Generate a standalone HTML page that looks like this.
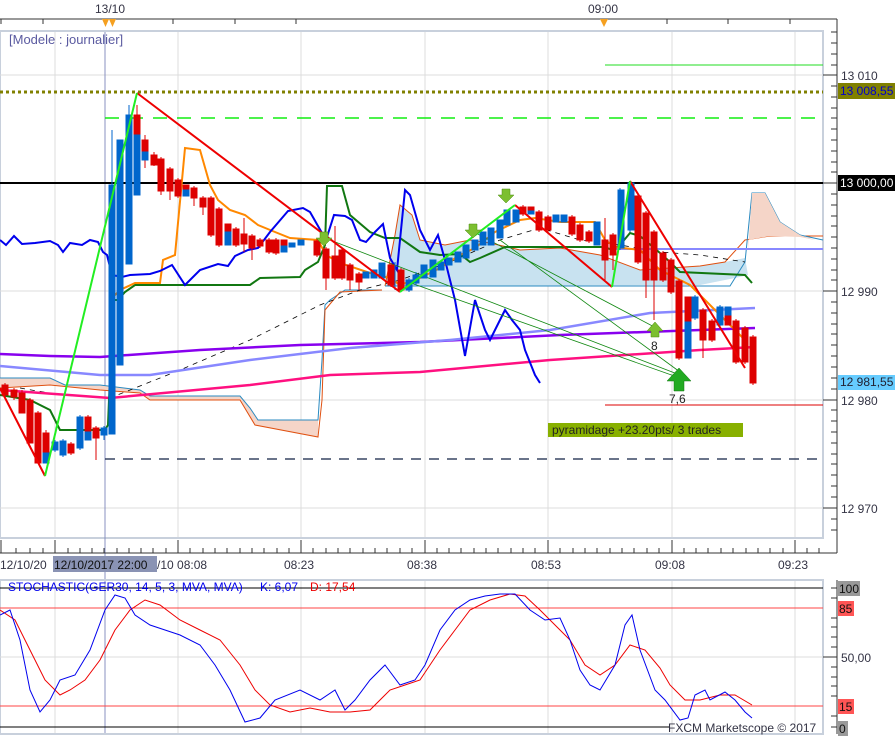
<!DOCTYPE html>
<html><head><meta charset="utf-8"><style>
html,body{margin:0;padding:0;background:#fff;}
svg{display:block;font-family:"Liberation Sans",sans-serif;}
</style></head><body>
<svg width="895" height="736" viewBox="0 0 895 736" xmlns="http://www.w3.org/2000/svg">
<rect width="895" height="736" fill="#fff"/>
<line x1="0" y1="19" x2="837" y2="19" stroke="#333"/>
<line x1="837" y1="19" x2="837" y2="553" stroke="#333"/>
<g stroke="#333">
<line x1="1" y1="19" x2="1" y2="24"/><line x1="43" y1="19" x2="43" y2="24"/><line x1="173" y1="19" x2="173" y2="24"/><line x1="235" y1="19" x2="235" y2="24"/><line x1="296" y1="19" x2="296" y2="24"/><line x1="667" y1="19" x2="667" y2="24"/><line x1="728" y1="19" x2="728" y2="24"/><line x1="790" y1="19" x2="790" y2="24"/>
</g>
<text x="95" y="13" font-size="12" fill="#334">13/10</text>
<text x="588" y="13" font-size="12" fill="#334">09:00</text>
<path d="M102,19 L109,19 L105.5,27 Z M109,19 L116,19 L112.5,27 Z M600,19 L608,19 L604,27 Z" fill="#f5a020"/>
<rect x="0" y="31" width="823" height="507" fill="#fff" stroke="#c8d0dc" stroke-width="2"/>
<g stroke="#dcdcdc">
<line x1="55" y1="32" x2="55" y2="537"/><line x1="178" y1="32" x2="178" y2="537"/><line x1="301" y1="32" x2="301" y2="537"/><line x1="425" y1="32" x2="425" y2="537"/><line x1="548" y1="32" x2="548" y2="537"/><line x1="672" y1="32" x2="672" y2="537"/><line x1="795" y1="32" x2="795" y2="537"/>
<line x1="0" y1="75" x2="823" y2="75"/><line x1="0" y1="291" x2="823" y2="291"/><line x1="0" y1="400" x2="823" y2="400"/><line x1="0" y1="508" x2="823" y2="508"/>
</g>
<line x1="105" y1="32" x2="105" y2="733" stroke="#8890c0"/>
<text x="9" y="44" font-size="13" fill="#5a5aa0">[Modele : journalier]</text>
<path d="M0,378 L50,378 L65,385 L100,385 L140,390 L150,396 L240,396 L250,408 L258,420 L318,420 L318,437 L255,425 L240,400 L150,400 L140,393 L100,390 L50,385 L0,388 Z" fill="#f5d5c8"/>
<path d="M0,378 L50,378 L65,385 L100,385 L140,390 L150,396 L240,396 L250,408 L258,420 L318,420 L322,360 L325,305 L330,300 L345,290 L382,290" fill="none" stroke="#2a8ac0" stroke-width="1"/>
<path d="M0,388 L50,385 L100,390 L140,393 L150,400 L240,400 L255,425 L318,437 L322,400 L325,310 L340,292 L382,290" fill="none" stroke="#e05010" stroke-width="1"/>
<path d="M385,286 L395,235 L400,205 L412,215 L420,240 L445,245 L470,240 L490,243 L520,250 L560,248 L600,255 L640,270 L700,266 L725,262 L745,258 L748,275 L735,278 L700,285 L385,286 Z" fill="#c8e2f0"/>
<path d="M385,286 L395,235 L400,205 L412,215 L420,240 L445,245 L470,240 L490,243 L520,250 L560,248 L600,255 L640,270 L700,266 L725,262 L745,240 L770,236 L800,236 L823,236" fill="none" stroke="#e05010" stroke-width="1"/>
<path d="M385,286 L730,286 L745,262 L752,193 L765,193 L780,222 L800,235 L823,240" fill="none" stroke="#2a8ac0" stroke-width="1"/>
<path d="M748,250 L752,193 L765,193 L780,222 L800,235 L815,240 L800,237 L770,236 L748,240 Z" fill="#f5d5c8"/>
<line x1="605" y1="65" x2="823" y2="65" stroke="#22dd22" stroke-width="1"/>
<line x1="0" y1="92" x2="823" y2="92" stroke="#808000" stroke-width="3" stroke-dasharray="3,3"/>
<line x1="105" y1="118" x2="818" y2="118" stroke="#11ee11" stroke-width="1.5" stroke-dasharray="14,10"/>
<line x1="0" y1="183" x2="823" y2="183" stroke="#000" stroke-width="2"/>
<line x1="610" y1="249" x2="823" y2="249" stroke="#8888ff" stroke-width="2"/>
<line x1="605" y1="405" x2="823" y2="405" stroke="#dd0000" stroke-width="1"/>
<line x1="105" y1="459" x2="818" y2="459" stroke="#112244" stroke-width="1.3" stroke-dasharray="10,8"/>
<path d="M20,388 L60,395 L110,398 L180,370 L250,340 L320,305 L360,290 L400,280 L450,262 L500,240 L540,228 L580,240 L620,245 L660,252 L700,255 L745,262" fill="none" stroke="#000" stroke-width="0.8" stroke-dasharray="5,5"/>
<polyline points="0,354 50,356 100,357 200,350 300,345 420,342 560,335 700,330 755,328" fill="none" stroke="#8800ee" stroke-width="2.5"/>
<polyline points="0,366 100,375 150,375 250,360 350,348 450,340 550,330 650,313 755,308" fill="none" stroke="#8888ff" stroke-width="2.5"/>
<polyline points="0,390 110,398 250,385 330,375 420,372 550,360 700,350 755,347" fill="none" stroke="#ff1080" stroke-width="2.5"/>
<polyline points="0,395 30,400 50,410 60,430 105,430 108,425 113,300 118,300 125,292 135,285 250,285 260,278 300,277 305,270 318,262 325,245 327,186 342,186 350,215 370,232 385,238 400,238 420,252 440,255 460,254 470,262 480,258 505,247 605,247 612,250 620,245 630,233 640,236 660,253 670,262 680,272 745,275 752,283" fill="none" stroke="#117711" stroke-width="2"/>
<polyline points="110,300 120,290 135,283 160,283 163,260 175,255 185,148 200,150 210,185 218,200 230,210 245,215 258,225 275,232 290,238 318,240 326,255 340,263 370,273 390,278 400,285 420,278 440,268 460,255 475,248 495,232 520,220 535,218 560,222 595,222 605,240 615,247 640,250 660,270 690,285 705,300 720,315 745,340" fill="none" stroke="#ff8800" stroke-width="2"/>
<polyline points="0,240 6,245 14,236 22,244 35,243 50,241 58,245 63,252 70,243 82,245 90,240 98,242 103,252 107,255 112,275 122,277 130,275 150,274 160,271 172,265 185,285 200,270 218,264 228,266 235,256 248,250 258,248 270,232 288,211 303,208 310,212 322,233 326,240 334,215 345,216 352,220 360,240 366,242 375,232 383,224 390,258 397,270 405,190 410,195 420,230 430,250 438,235 445,260 455,300 465,356 475,300 485,330 490,340 505,310 512,320 520,330 525,350 535,375 540,383" fill="none" stroke="#0000ee" stroke-width="2"/>
<path d="M408,282 L680,378 M330,240 L680,375 M470,230 L660,330 M500,240 L680,372" fill="none" stroke="#118811" stroke-width="0.8"/>
<g>
<g fill="#dd0000" stroke="#dd0000">
<path d="M5,383V398M14,388V400M22,390V413M30,398V443M38,411V463M46,430V463M71,442V455M88,415V440M96,426V460M137,105V195M145,135V168M154,152V166M161,157V195M170,167V200M178,178V198M194,186V206M203,196V215M211,196V237M219,207V247M236,227V247M244,218V252M252,234V260M260,238V248M269,238V254M276,238V255M317,239V257M326,247V290M335,226V280M342,248V280M350,263V290M359,272V290M391,263V287M401,268V292M523,205V216M539,210V232M548,215V232M572,215V236M580,223V242M589,230V243M605,218V280M613,233V270M638,194V264M646,211V298M654,230V320M663,251V282M671,258V294M679,279V360M703,308V358M712,319V342M736,319V364M745,326V364M753,335V385" fill="none" stroke-width="1"/>
<rect x="2" y="385" width="6" height="10"/><rect x="11" y="390" width="6" height="7"/><rect x="19" y="393" width="6" height="20"/><rect x="27" y="400" width="6" height="43"/><rect x="35" y="413" width="6" height="50"/><rect x="43" y="433" width="6" height="20"/>
<rect x="68" y="444" width="6" height="9"/><rect x="85" y="417" width="6" height="15"/><rect x="93" y="428" width="6" height="10"/>
<rect x="134" y="115" width="6" height="20"/><rect x="142" y="140" width="6" height="12"/><rect x="151" y="155" width="6" height="10"/><rect x="158" y="159" width="6" height="32"/><rect x="167" y="169" width="6" height="22"/><rect x="175" y="180" width="6" height="16"/><rect x="183" y="185" width="6" height="5"/><rect x="191" y="188" width="6" height="10"/><rect x="200" y="198" width="6" height="9"/><rect x="208" y="198" width="6" height="37"/><rect x="216" y="209" width="6" height="36"/><rect x="225" y="224" width="6" height="8"/><rect x="233" y="229" width="6" height="16"/><rect x="241" y="234" width="6" height="10"/><rect x="249" y="236" width="6" height="12"/><rect x="257" y="240" width="6" height="6"/><rect x="266" y="240" width="6" height="12"/><rect x="273" y="240" width="6" height="13"/><rect x="281" y="240" width="6" height="6"/><rect x="314" y="241" width="6" height="14"/><rect x="323" y="249" width="6" height="29"/><rect x="332" y="256" width="6" height="22"/><rect x="339" y="250" width="6" height="28"/><rect x="347" y="265" width="6" height="15"/><rect x="356" y="274" width="6" height="8"/><rect x="388" y="265" width="6" height="20"/><rect x="398" y="270" width="6" height="20"/>
<rect x="520" y="207" width="6" height="7"/><rect x="528" y="207" width="6" height="4"/><rect x="536" y="212" width="6" height="18"/><rect x="545" y="217" width="6" height="13"/><rect x="569" y="217" width="6" height="17"/><rect x="577" y="225" width="6" height="15"/><rect x="586" y="232" width="6" height="9"/><rect x="602" y="240" width="6" height="20"/><rect x="610" y="235" width="6" height="20"/><rect x="635" y="196" width="6" height="66"/><rect x="643" y="213" width="6" height="67"/><rect x="651" y="232" width="6" height="48"/><rect x="660" y="253" width="6" height="27"/><rect x="668" y="260" width="6" height="32"/><rect x="676" y="281" width="6" height="77"/><rect x="685" y="297" width="6" height="25"/><rect x="700" y="310" width="6" height="30"/><rect x="709" y="321" width="6" height="19"/><rect x="725" y="315" width="6" height="10"/><rect x="733" y="321" width="6" height="41"/><rect x="742" y="328" width="6" height="34"/><rect x="750" y="337" width="6" height="46"/>
</g>
<g fill="#0066cc" stroke="#0066cc">
<path d="M55,440V452M63,439V457M80,415V450M104,426V440M112,130V434M120,140V365M129,105V264M395,262V290M409,278V292M416,272V285M620,188V250M630,181V232M695,295V320M720,305V328" fill="none" stroke-width="1"/>
<rect x="43" y="453" width="6" height="10"/><rect x="52" y="442" width="6" height="8"/><rect x="60" y="441" width="6" height="14"/><rect x="77" y="417" width="6" height="31"/><rect x="85" y="432" width="6" height="8"/><rect x="101" y="428" width="6" height="7"/>
<rect x="109" y="185" width="6" height="249"/><rect x="117" y="140" width="6" height="225"/><rect x="126" y="115" width="6" height="149"/><rect x="134" y="135" width="6" height="60"/><rect x="142" y="152" width="6" height="8"/><rect x="183" y="190" width="6" height="6"/><rect x="225" y="232" width="6" height="13"/><rect x="281" y="246" width="6" height="6"/><rect x="289" y="243" width="6" height="4"/><rect x="298" y="240" width="6" height="5"/><rect x="363" y="272" width="6" height="6"/><rect x="371" y="270" width="6" height="8"/><rect x="379" y="263" width="6" height="15"/>
<rect x="406" y="280" width="6" height="10"/><rect x="413" y="275" width="6" height="8"/><rect x="421" y="265" width="6" height="13"/><rect x="430" y="260" width="6" height="17"/><rect x="438" y="262" width="6" height="8"/><rect x="446" y="258" width="6" height="7"/><rect x="455" y="252" width="6" height="10"/><rect x="463" y="245" width="6" height="13"/><rect x="472" y="240" width="6" height="10"/><rect x="480" y="232" width="6" height="13"/><rect x="488" y="228" width="6" height="17"/><rect x="497" y="220" width="6" height="18"/><rect x="504" y="210" width="6" height="15"/><rect x="513" y="210" width="6" height="12"/><rect x="528" y="211" width="6" height="3"/><rect x="553" y="215" width="6" height="7"/><rect x="561" y="215" width="6" height="7"/><rect x="594" y="222" width="6" height="23"/><rect x="618" y="190" width="6" height="58"/><rect x="628" y="183" width="6" height="47"/><rect x="685" y="322" width="6" height="36"/><rect x="692" y="297" width="6" height="21"/><rect x="717" y="307" width="6" height="18"/><rect x="725" y="307" width="6" height="8"/>
</g>
</g>
<path d="M0,388 L45,476 M137,93 L400,292 M515,205 L612,287 M630,181 L745,368" fill="none" stroke="#ee0000" stroke-width="2"/>
<path d="M45,476 L137,93 M400,292 L515,205 M612,287 L630,181" fill="none" stroke="#22ee22" stroke-width="2"/>
<g fill="#7cbf30" stroke="#4a8a10" stroke-width="0.5">
<path d="M320,232h8v6h4l-8,8l-8,-8h4z"/><path d="M469,224h8v6h4l-8,8l-8,-8h4z"/><path d="M502,189h8v6h4l-8,8l-8,-8h4z"/>
<path d="M651,337h8v-6h4l-8,-9l-8,9h4z"/>
</g>
<path d="M674,391h10v-10h7l-12,-13l-12,13h7z" fill="#22aa22" stroke="#117711" stroke-width="0.5"/>
<text x="651" y="350" font-size="12" fill="#222">8</text>
<text x="669" y="403" font-size="12" fill="#222">7,6</text>
<rect x="548" y="423" width="195" height="14" fill="#88b000"/>
<text x="552" y="434" font-size="12" fill="#222">pyramidage +23.20pts/ 3 trades</text>
<g stroke="#333">
<line x1="823" y1="75" x2="837" y2="75"/><line x1="823" y1="183" x2="837" y2="183"/><line x1="823" y1="291" x2="837" y2="291"/><line x1="823" y1="400" x2="837" y2="400"/><line x1="823" y1="508" x2="837" y2="508"/>
<path d="M831,32h6M831,43h6M831,54h6M831,65h6M831,86h6M831,97h6M831,108h6M831,118h6M831,129h6M831,140h6M831,151h6M831,162h6M831,172h6M831,194h6M831,205h6M831,216h6M831,226h6M831,237h6M831,248h6M831,259h6M831,270h6M831,280h6M831,302h6M831,313h6M831,324h6M831,334h6M831,345h6M831,356h6M831,367h6M831,378h6M831,389h6M831,410h6M831,421h6M831,432h6M831,443h6M831,454h6M831,464h6M831,475h6M831,486h6M831,497h6M831,519h6M831,530h6"/>
</g>
<text x="841" y="80" font-size="12" fill="#334">13 010</text>
<rect x="838" y="83" width="57" height="16" fill="#808000"/><text x="840" y="95" font-size="12" fill="#0000cc">13 008,55</text>
<rect x="838" y="175" width="57" height="16" fill="#000"/><text x="840" y="187" font-size="12" fill="#fff">13 000,00</text>
<text x="841" y="296" font-size="12" fill="#334">12 990</text>
<rect x="838" y="375" width="57" height="15" fill="#66ccff"/><text x="840" y="386" font-size="12" fill="#223">12 981,55</text>
<text x="841" y="405" font-size="12" fill="#334">12 980</text>
<text x="841" y="513" font-size="12" fill="#334">12 970</text>
<line x1="0" y1="553" x2="837" y2="553" stroke="#333"/>
<g stroke="#333">
<path d="M1,540V553M55,540V553M178,540V553M301,540V553M425,540V553M548,540V553M672,540V553M795,540V553"/>
<path d="M16,548V553M30,548V553M43,548V553M68,548V553M80,548V553M92,548V553M104,548V553M117,548V553M129,548V553M141,548V553M153,548V553M166,548V553M190,548V553M203,548V553M215,548V553M227,548V553M240,548V553M252,548V553M264,548V553M277,548V553M289,548V553M313,548V553M326,548V553M338,548V553M350,548V553M363,548V553M375,548V553M387,548V553M400,548V553M412,548V553M437,548V553M449,548V553M461,548V553M474,548V553M486,548V553M498,548V553M511,548V553M523,548V553M535,548V553M560,548V553M573,548V553M585,548V553M597,548V553M610,548V553M622,548V553M634,548V553M647,548V553M659,548V553M684,548V553M696,548V553M708,548V553M721,548V553M733,548V553M746,548V553M758,548V553M770,548V553M783,548V553M807,548V553M819,548V553"/>
</g>
<text x="0" y="569" font-size="12" fill="#334">12/10/20</text>
<rect x="53" y="556" width="104" height="16" fill="#8a93b4"/>
<text x="54" y="569" font-size="12" fill="#111">12/10/2017 22:00</text>
<text x="157" y="569" font-size="12" fill="#334">/10 08:08</text>
<text x="284" y="569" font-size="12" fill="#334">08:23</text>
<text x="407" y="569" font-size="12" fill="#334">08:38</text>
<text x="531" y="569" font-size="12" fill="#334">08:53</text>
<text x="655" y="569" font-size="12" fill="#334">09:08</text>
<text x="778" y="569" font-size="12" fill="#334">09:23</text>
<rect x="0" y="580" width="823" height="154" fill="#fff" stroke="#c8d0dc" stroke-width="2"/>
<g stroke="#dcdcdc">
<line x1="55" y1="581" x2="55" y2="733"/><line x1="178" y1="581" x2="178" y2="733"/><line x1="301" y1="581" x2="301" y2="733"/><line x1="425" y1="581" x2="425" y2="733"/><line x1="548" y1="581" x2="548" y2="733"/><line x1="672" y1="581" x2="672" y2="733"/><line x1="795" y1="581" x2="795" y2="733"/>
<line x1="0" y1="657" x2="823" y2="657"/>
</g>
<line x1="105" y1="581" x2="105" y2="733" stroke="#8890c0"/>
<line x1="0" y1="588" x2="823" y2="588" stroke="#000"/>
<line x1="0" y1="608" x2="823" y2="608" stroke="#ff4444"/>
<line x1="0" y1="706" x2="823" y2="706" stroke="#ff4444"/>
<line x1="0" y1="727" x2="670" y2="727" stroke="#000"/>
<polyline points="0,610 15,620 30,650 45,680 60,695 70,690 85,680 100,660 115,630 130,610 145,600 160,605 180,620 200,630 220,640 240,665 255,690 270,705 290,712 310,708 330,712 350,712 370,710 390,690 405,685 420,680 440,650 455,630 470,610 490,600 510,594 525,596 540,610 555,625 570,640 585,665 600,675 615,665 630,645 645,650 660,668 670,685 685,700 700,700 720,695 735,695 752,705" fill="none" stroke="#ee0000" stroke-width="1"/>
<polyline points="0,615 10,610 20,640 30,690 40,712 50,700 60,680 75,675 90,650 105,610 115,595 125,598 135,615 150,625 165,630 180,635 200,645 215,665 230,690 245,722 260,718 275,700 300,690 320,700 335,690 345,710 355,700 370,680 385,665 400,685 415,680 425,665 440,630 455,610 470,600 485,596 500,594 515,594 530,610 545,620 560,618 570,640 580,670 590,685 600,690 615,665 625,625 632,615 640,650 655,690 665,700 680,720 688,718 695,695 705,690 710,700 725,692 735,700 745,712 752,718" fill="none" stroke="#0000ee" stroke-width="1"/>
<text x="8" y="591" font-size="12" fill="#0000ee">STOCHASTIC(GER30, 14, 5, 3, MVA, MVA)</text>
<text x="260" y="591" font-size="12" fill="#0000ee">K: 6,07</text>
<text x="310" y="591" font-size="12" fill="#ee0000">D: 17,54</text>
<text x="668" y="732" font-size="12" fill="#334">FXCM Marketscope © 2017</text>
<line x1="837" y1="580" x2="837" y2="734" stroke="#333"/>
<g stroke="#333"><path d="M823,657h14M831,588h6M831,598h6M831,618h6M831,627h6M831,637h6M831,647h6M831,667h6M831,677h6M831,686h6M831,696h6M831,716h6M831,727h6"/></g>
<rect x="838" y="581" width="22" height="15" fill="#999"/><text x="839" y="593" font-size="12" fill="#111">100</text>
<rect x="838" y="601" width="16" height="15" fill="#ff5555"/><text x="839" y="613" font-size="12" fill="#111">85</text>
<text x="841" y="662" font-size="12" fill="#334">50,00</text>
<rect x="838" y="699" width="16" height="15" fill="#ff5555"/><text x="839" y="711" font-size="12" fill="#111">15</text>
<rect x="838" y="721" width="10" height="15" fill="#999"/><text x="839" y="733" font-size="12" fill="#111">0</text>
</svg>
</body></html>
